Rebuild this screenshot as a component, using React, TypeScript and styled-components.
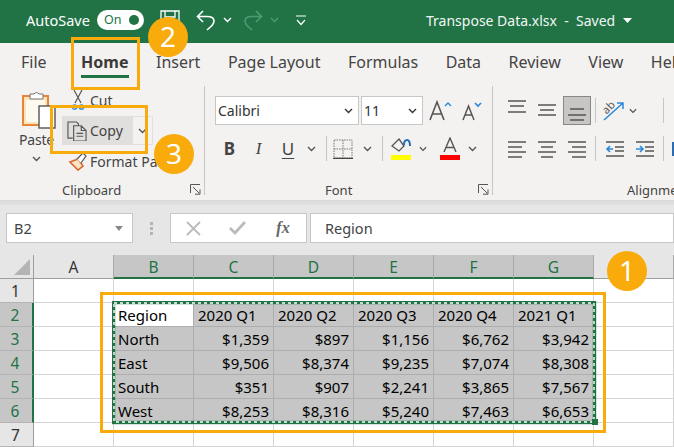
import React from "react";
import styled, { createGlobalStyle } from "styled-components";

const Global = createGlobalStyle`
  html, body { margin: 0; padding: 0; background: #fff; }
  * { box-sizing: border-box; }
`;
const FONT = `"Noto Sans", "Open Sans", sans-serif`;
const ORANGE = "#f8ab0a";
const GREEN = "#217346";

const Page = styled.div`
  position: relative; width: 674px; height: 447px; overflow: hidden; font-family: ${FONT}; background: #fff; color: #444;
`;
/* title bar */
const TitleBar = styled.div`
  display: flex; align-items: center; height: 43px; background: ${GREEN}; color: #fff; padding: 0 0 3px 26px; font-size: 14.5px;
`;
const AutoSave = styled.span` width: 71px; `;
const Toggle = styled.div`
  position: relative; width: 47px; height: 20px; border-radius: 10px; background: #fff; color: ${GREEN}; font-size: 12.5px; line-height: 20px; padding-left: 7px; margin-right: 16px;
  &::after { content: ""; position: absolute; right: 5px; top: 5px; width: 10px; height: 10px; border-radius: 50%; background: ${GREEN}; }
`;
const TitleIcon = styled.span<{ $w: number; $ml?: number }>`
  display: flex; justify-content: center; align-items: center; width: ${p => p.$w}px; margin-left: ${p => p.$ml ?? 0}px; flex: none;
`;
const FileName = styled.div`
  margin-left: 110px; white-space: pre; font-size: 14px; color: #f2f7f4; width: 197px;
`;
/* tabs */
const TabBar = styled.div`
  display: flex; height: 41px; background: #f3f2f1; padding: 0 0 0 21px; gap: 27.5px; font-size: 16px; white-space: nowrap; overflow: hidden;
`;
const Tab = styled.div<{ $active?: boolean; $ml?: number }>`
  position: relative; line-height: 38px; color: #444; font-weight: ${p => (p.$active ? 700 : 400)}; flex: none; margin-left: ${p => p.$ml ?? 0}px;
  ${p => p.$active && `color:#3b3a39; &::after{content:"";position:absolute;left:0;right:0;bottom:6px;height:3px;background:${GREEN};}`}
`;
/* ribbon */
const Ribbon = styled.div`
  display: flex; height: 116px; background: #f3f2f1; overflow: hidden;
`;
const Group = styled.div<{ $w: number; $sep?: boolean }>`
  position: relative; display: flex; flex-direction: column; width: ${p => p.$w}px; flex: none; margin: 2px 0 1px;
  ${p => p.$sep && `&::after{content:"";position:absolute;right:0;top:0;bottom:4px;width:1px;background:#c8c6c4;}`}
`;
const GroupBody = styled.div<{ $pl: number }>`
  flex: 1; padding: 10px 0 0 ${p => p.$pl}px; display: flex; flex-direction: column; gap: 11px;
`;
const GroupLabel = styled.div<{ $x: number }>`
  font-size: 13px; line-height: 18px; padding-left: ${p => p.$x}px; color: #444; height: 18px; white-space: nowrap;
`;
const Launcher = styled.span<{ $r: number }>`
  position: absolute; right: ${p => p.$r}px; bottom: 4px; width: 11px; height: 11px; display: flex;
`;
const ClipboardBody = styled.div`
  flex: 1; display: flex; padding-top: 4px;
`;
const PasteCol = styled.div`
  width: 62px; display: flex; flex-direction: column; align-items: flex-start; padding-left: 19px; font-size: 14px; line-height: 18px;
`;
const PasteLabel = styled.div` margin-top: 2px; letter-spacing: -.2px; `;
const PasteChevron = styled.div` padding-left: 13px; height: 14px; display:flex; align-items:center; margin-top:3px; `;
const ClipList = styled.div` display: flex; flex-direction: column; width: 142px; `;
const ClipRow = styled.div<{ $h: number; $mb?: number }>`
  display: flex; align-items: center; height: ${p => p.$h}px; margin-bottom: ${p => p.$mb ?? 0}px; font-size: 14px; white-space: nowrap; margin-left: 4px;
`;
const CopyMain = styled.div`
  display: flex; align-items: center; width: 71px; height: 29px; background: #e1dfdd; margin-left: -4px; padding-left: 4px;
`;
const CopySplit = styled.div`
  width: 20px; height: 29px; border: 1px solid #e1dfdd; border-left: 0; display: flex; align-items: center; justify-content: center;
`;
const ClipIcon = styled.span<{ $w: number }>` width: ${p => p.$w}px; display: flex; flex: none; align-items: center; justify-content: center; `;
const Row = styled.div<{ $h: number }>` display: flex; align-items: center; height: ${p => p.$h}px; `;
const Select = styled.div<{ $w: number; $ml?: number }>`
  width: ${p => p.$w}px; height: 29px; background: #fff; border: 1px solid #c8c6c4; margin-left: ${p => p.$ml ?? 0}px; display: flex; align-items: center; justify-content: space-between; padding: 0 5px 0 2px; font-size: 14px; color: #333; flex: none;
`;
const Slot = styled.span<{ $w: number; $ml?: number }>`
  display: flex; align-items: center; justify-content: center; flex: none; width: ${p => p.$w}px; margin-left: ${p => p.$ml ?? 0}px; height: 100%;
`;
const Pressed = styled.span`
  display: flex; align-items: center; justify-content: center; flex: none; width: 28px; height: 29px; background: #c8c6c4; border: 1px solid #8a8886; margin-left: 1px;
`;
const VSep = styled.span<{ $ml: number; $h?: number }>`
  width: 1px; height: ${p => p.$h ?? 25}px; background: #c8c6c4; margin-left: ${p => p.$ml}px; flex: none;
`;
const Letter = styled.span<{ $b?: boolean; $i?: boolean; $u?: boolean }>`
  font-size: 17px; color: #444; font-weight: ${p => (p.$b ? 700 : 400)};
  font-family: ${p => (p.$i ? `"Liberation Serif", serif` : FONT)}; font-style: ${p => (p.$i ? "italic" : "normal")};
  text-decoration: ${p => (p.$u ? "underline" : "none")}; text-underline-offset: 3px; line-height: 1;
`;
const FxLetter = styled(Letter)` color: #666; font-weight: 700; font-size: 16px; `;
const Shadow = styled.div` height: 5px; background: linear-gradient(#d8d8d8, #e2e2e2); `;
/* formula bar */
const FormulaBar = styled.div`
  display: flex; align-items: center; height: 50px; background: #e6e6e6; padding: 0 0 4px 6px; font-size: 14.5px;
`;
const FieldBox = styled.div<{ $w: number; $ml?: number }>`
  display: flex; align-items: center; flex: none; height: 30px; width: ${p => p.$w}px; margin-left: ${p => p.$ml ?? 0}px; background: #fff; border: 1px solid #c6c6c6; color: #444;
`;
const NameText = styled.span<{ $pl?: number }>` flex: 1; padding-left: ${p => p.$pl ?? 7}px; `;
const Dots = styled.span`
  width: 3px; height: 13px; margin-left: 17px; flex: none;
  background: repeating-linear-gradient(#b4b4b4 0 3px, transparent 3px 5px);
`;
/* sheet */
const Sheet = styled.div`
  display: grid; grid-template-columns: 34px repeat(8, 80px); grid-auto-rows: 24px; font-size: 15px; line-height: 25px; color: #000;
`;
const Corner = styled.div`
  background: #e6e6e6; border-right: 1px solid #9e9e9e; border-bottom: 1px solid #9e9e9e; position: relative;
  &::after { content: ""; position: absolute; right: 3px; bottom: 3px; border-left: 16px solid transparent; border-bottom: 16px solid #b4b4b4; }
`;
const ColHead = styled.div<{ $sel?: boolean }>`
  text-align: center; background: ${p => (p.$sel ? "#c6c6c6" : "#e6e6e6")}; color: ${p => (p.$sel ? GREEN : "#333")};
  border-right: 1px solid #aaa; border-bottom: ${p => (p.$sel ? `2px solid ${GREEN}` : "1px solid #9e9e9e")};
  font-size: 15.5px;
`;
const RowHead = styled.div<{ $sel?: boolean }>`
  text-align: center; background: ${p => (p.$sel ? "#c6c6c6" : "#e6e6e6")}; color: ${p => (p.$sel ? GREEN : "#333")};
  border-right: ${p => (p.$sel ? `2px solid ${GREEN}` : "1px solid #9e9e9e")}; border-bottom: 1px solid #b4b4b4; font-size: 15.5px; padding-right: 2px;
`;
const Cell = styled.div<{ $sel?: boolean; $white?: boolean; $right?: boolean }>`
  background: ${p => (p.$sel && !p.$white ? "#c6c6c6" : "#fff")};
  border-right: 1px solid ${p => (p.$sel ? "#aeaeae" : "#d4d4d4")}; border-bottom: 1px solid ${p => (p.$sel ? "#aeaeae" : "#d4d4d4")};
  text-align: ${p => (p.$right ? "right" : "left")}; padding: 0 4px; white-space: nowrap; overflow: hidden;
`;
/* overlays */
const OrangeBox = styled.div<{ $x: number; $y: number; $w: number; $h: number }>`
  position: absolute; left: ${p => p.$x}px; top: ${p => p.$y}px; width: ${p => p.$w}px; height: ${p => p.$h}px; border: 3px solid ${ORANGE};
`;
const Badge = styled.div<{ $x: number; $y: number }>`
  position: absolute; left: ${p => p.$x}px; top: ${p => p.$y}px; width: 40px; height: 40px; border-radius: 50%; background: ${ORANGE}; color: #fff; font-size: 28px; line-height: 38px; text-align: center;
`;
const Ants = styled.svg`
  position: absolute; left: 112px; top: 301px;
`;

const Chevron = ({ c = "#555" }: { c?: string }) => (
  <svg width="9" height="6" viewBox="0 0 9 6"><path d="M1 1l3.5 3.5L8 1" fill="none" stroke={c} strokeWidth="1.4" /></svg>
);
const LauncherIcon = () => (
  <svg width="11" height="11" viewBox="0 0 11 11" fill="none" stroke="#555"><path d="M.5 9V.5H10M3 3l6.5 6.5M5 10.2h5V5.5" /></svg>
);
const SaveIcon = () => (
  <svg width="20" height="20" viewBox="0 0 20 20" fill="none" stroke="#fff" strokeWidth="1.3"><path d="M1 1h18v18H1zM5 1v6h10V1M5 19v-7h10v7" /></svg>
);
const Undo = ({ c, flip }: { c: string; flip?: boolean }) => (
  <svg width="19" height="22" viewBox="0 0 19 22" fill="none" stroke={c} strokeWidth="1.6" style={flip ? { transform: "scaleX(-1)" } : undefined}>
    <path d="M7 2L1.500 7.500 7 13M2 7.500h9c4.500 0 7 2 7 4.500 0 2-1 3-2 4.500L11 21" />
  </svg>
);
const Customize = () => (
  <svg width="12" height="11" viewBox="0 0 12 11" fill="none" stroke="#fff" strokeWidth="1.2"><path d="M1 1h10M2 5l4 4.500 4-4.500" /></svg>
);
const Lines = ({ rows, h = 20 }: { rows: [number, number, number][]; h?: number }) => (
  <svg width="18" height={h} viewBox={`0 0 18 ${h}`} stroke="#555" strokeWidth="1.5">
    {rows.map(([y, a, b], i) => <path key={i} d={`M${a} ${y}H${b}`} />)}
  </svg>
);
const IndentIcon = ({ flip }: { flip?: boolean }) => (
  <svg width="20" height="18" viewBox="0 0 20 18" fill="none">
    <path d="M1 2h18M10 7h9M10 11h9M1 16h18" stroke="#555" strokeWidth="1.5" />
    <path d={flip ? "M1 9h6M5 6l3 3-3 3" : "M8 9H2M5 6L2 9l3 3"} stroke="#2b88d8" strokeWidth="1.6" />
  </svg>
);

const columns = ["B", "C", "D", "E", "F", "G"];
const data = [
  ["Region", "2020 Q1", "2020 Q2", "2020 Q3", "2020 Q4", "2021 Q1"],
  ["North", "$1,359", "$897", "$1,156", "$6,762", "$3,942"],
  ["East", "$9,506", "$8,374", "$9,235", "$7,074", "$8,308"],
  ["South", "$351", "$907", "$2,241", "$3,865", "$7,567"],
  ["West", "$8,253", "$8,316", "$5,240", "$7,463", "$6,653"],
];

export default function App() {
  return (
    <Page>
      <Global />
      <TitleBar>
        <AutoSave>AutoSave</AutoSave>
        <Toggle>On</Toggle>
        <TitleIcon $w={20}><SaveIcon /></TitleIcon>
        <TitleIcon $w={19} $ml={16}><Undo c="#fff" /></TitleIcon>
        <TitleIcon $w={24}><Chevron c="#fff" /></TitleIcon>
        <TitleIcon $w={19} $ml={5}><Undo c="#4f9a74" flip /></TitleIcon>
        <TitleIcon $w={22}><Chevron c="#4f9a74" /></TitleIcon>
        <TitleIcon $w={31}><Customize /></TitleIcon>
        <FileName>Transpose Data.xlsx  -  Saved</FileName>
        <svg width="9" height="5" viewBox="0 0 9 5"><path d="M0 0h9L4.500 5z" fill="#fff" /></svg>
      </TitleBar>

      <TabBar>
        <Tab>File</Tab>
        <Tab $active $ml={7}>Home</Tab>
        <Tab>Insert</Tab>
        <Tab>Page Layout</Tab>
        <Tab>Formulas</Tab>
        <Tab>Data</Tab>
        <Tab>Review</Tab>
        <Tab>View</Tab>
        <Tab>Help</Tab>
      </TabBar>

      <Ribbon>
        <Group $w={205} $sep>
          <ClipboardBody>
            <PasteCol>
              <svg width="36" height="39" viewBox="0 0 36 39" style={{ marginLeft: 3 }}>
                <rect x="1" y="6" width="25" height="29" fill="#fbe6b8" stroke="#e8853b" strokeWidth="2" />
                <rect x="4" y="10" width="19" height="22" fill="#fffaf0" />
                <path d="M8 9V4h4a3 3 0 0 1 5 0h4v5z" fill="#fff" stroke="#777" />
                <rect x="17" y="16" width="16" height="22" fill="#fff" stroke="#555" strokeWidth="1.4" />
              </svg>
              <PasteLabel>Paste</PasteLabel>
              <PasteChevron><Chevron /></PasteChevron>
            </PasteCol>
            <ClipList>
              <ClipRow $h={20} $mb={6}>
                <ClipIcon $w={24}>
                  <svg width="14" height="22" viewBox="0 0 14 22" fill="none"><path d="M3 1l7 13M11 1L4 14" stroke="#555" strokeWidth="1.2" /><circle cx="3.500" cy="18" r="2.200" stroke="#2b88d8" strokeWidth="1.3" /><circle cx="10.500" cy="18" r="2.200" stroke="#2b88d8" strokeWidth="1.3" /></svg>
                </ClipIcon>
                Cut
              </ClipRow>
              <ClipRow $h={29}>
                <CopyMain>
                  <ClipIcon $w={24}>
                    <svg width="20" height="20" viewBox="0 0 21 21" fill="none" stroke="#555" strokeWidth="1.2" style={{ marginRight: 3 }}><path d="M6 18H1V1h9l2 2v2" /><path d="M7 5h8l5 5v11H7zM15 5v5h5M10 13h7M10 16h7" /></svg>
                  </ClipIcon>
                  Copy
                </CopyMain>
                <CopySplit><Chevron /></CopySplit>
              </ClipRow>
              <ClipRow $h={32}>
                <ClipIcon $w={24}>
                  <svg width="20" height="20" viewBox="0 0 20 20" fill="none"><path d="M2 11l8-3 5 7-5 4z" fill="#fbe3c8" stroke="#d9662c" strokeWidth="1.6" /><path d="M9 8l6-6 3 3-5 7" fill="#fff" stroke="#555" strokeWidth="1.2" /></svg>
                </ClipIcon>
                Format Painter
              </ClipRow>
            </ClipList>
          </ClipboardBody>
          <GroupLabel $x={62}>Clipboard</GroupLabel>
          <Launcher $r={4}><LauncherIcon /></Launcher>
        </Group>

        <Group $w={288} $sep>
          <GroupBody $pl={10}>
            <Row $h={29}>
              <Select $w={144}>Calibri<Chevron c="#333" /></Select>
              <Select $w={62} $ml={2}>11<Chevron c="#333" /></Select>
              <Slot $w={34}>
                <svg width="23" height="21" viewBox="0 0 23 21" fill="none"><path d="M1 20L8 2l7 18M3.500 14h9" stroke="#555" strokeWidth="1.6" /><path d="M16 6l3-3 3 3" stroke="#2b88d8" strokeWidth="1.4" /></svg>
              </Slot>
              <Slot $w={30}>
                <svg width="20" height="20" viewBox="0 0 20 20" fill="none"><path d="M1 19L6.500 5 12 19M3 14h7" stroke="#555" strokeWidth="1.5" /><path d="M13 2l3 3 3-3" stroke="#2b88d8" strokeWidth="1.6" /></svg>
              </Slot>
            </Row>
            <Row $h={25}>
              <Slot $w={29}><Letter $b>B</Letter></Slot>
              <Slot $w={29}><Letter $i>I</Letter></Slot>
              <Slot $w={30}><Letter $u>U</Letter></Slot>
              <Slot $w={16}><Chevron /></Slot>
              <VSep $ml={7} />
              <Slot $w={32}>
                <svg width="20" height="20" viewBox="0 0 20 20" fill="none" stroke="#777" strokeDasharray="1.500 1"><path d="M1 1h18v18H1zM10 1v18M1 10h18" /><path d="M0 19.500h20" stroke="#444" strokeDasharray="none" strokeWidth="1.400" /></svg>
              </Slot>
              <Slot $w={16}><Chevron /></Slot>
              <VSep $ml={7} />
              <Slot $w={36}>
                <svg width="20" height="24" viewBox="0 0 20 24" fill="none"><path d="M1 9l7-7 5 7-5 5z" stroke="#555" strokeWidth="1.300" /><path d="M13 8c0-3 1-5 3-5s3 3 3 6" stroke="#1f6fb8" strokeWidth="2" /><rect y="18" width="20" height="5" fill="#ffff00" /></svg>
              </Slot>
              <Slot $w={8}><Chevron /></Slot>
              <Slot $w={28} $ml={9}>
                <svg width="20" height="24" viewBox="0 0 20 24" fill="none"><path d="M4 15L10 1l6 14M6 10.500h8" stroke="#555" strokeWidth="1.400" /><rect y="18" width="20" height="5" fill="#ff0000" /></svg>
              </Slot>
              <Slot $w={16}><Chevron /></Slot>
            </Row>
          </GroupBody>
          <GroupLabel $x={120}>Font</GroupLabel>
          <Launcher $r={4}><LauncherIcon /></Launcher>
        </Group>

        <Group $w={181}>
          <GroupBody $pl={9}>
            <Row $h={29}>
              <Slot $w={30}><Lines h={24} rows={[[2, 0, 18], [7, 2, 16], [13, 0, 18]]} /></Slot>
              <Slot $w={30}><Lines h={24} rows={[[6, 0, 18], [11, 2, 16], [16, 0, 18]]} /></Slot>
              <Pressed><Lines h={24} rows={[[10, 2, 16], [16, 0, 18], [21, 2, 16]]} /></Pressed>
              <VSep $ml={4} />
              <Slot $w={30} $ml={3}>
                <svg width="24" height="22" viewBox="0 0 24 22" fill="none"><path d="M2 20L21 3M15 3h6v6" stroke="#2b88d8" strokeWidth="1.500" /><text x="1" y="12" fontSize="11" fill="#555" transform="rotate(-45 6 9)" fontFamily="Noto Sans, sans-serif">ab</text></svg>
              </Slot>
              <Slot $w={8}><Chevron /></Slot>
              <VSep $ml={26} />
            </Row>
            <Row $h={25}>
              <Slot $w={30}><Lines rows={[[3, 0, 18], [8, 0, 14], [13, 0, 18], [18, 0, 14]]} /></Slot>
              <Slot $w={30}><Lines rows={[[3, 0, 18], [8, 3, 15], [13, 0, 18], [18, 3, 15]]} /></Slot>
              <Slot $w={30}><Lines rows={[[3, 0, 18], [8, 4, 18], [13, 0, 18], [18, 4, 18]]} /></Slot>
              <VSep $ml={3} />
              <Slot $w={30} $ml={4}><IndentIcon /></Slot>
              <Slot $w={30}><IndentIcon flip /></Slot>
              <VSep $ml={3} />
              <Slot $w={8} $ml={8}>
                <svg width="8" height="14" viewBox="0 0 8 14"><rect width="8" height="14" fill="#2b6cb0" /></svg>
              </Slot>
            </Row>
          </GroupBody>
          <GroupLabel $x={134}>Alignment</GroupLabel>
        </Group>
      </Ribbon>
      <Shadow />

      <FormulaBar>
        <FieldBox $w={127}>
          <NameText>B2</NameText>
          <svg width="8" height="5" viewBox="0 0 8 5" style={{ marginRight: 9 }}><path d="M0 0h8L4 5z" fill="#888" /></svg>
        </FieldBox>
        <Dots />
        <FieldBox $w={137} $ml={17}>
          <Slot $w={44}>
            <svg width="15" height="15" viewBox="0 0 15 15"><path d="M1 1l13 13M14 1L1 14" stroke="#bbb" strokeWidth="1.800" /></svg>
          </Slot>
          <Slot $w={45}>
            <svg width="17" height="14" viewBox="0 0 17 14"><path d="M1 7l5 5L16 1" fill="none" stroke="#bbb" strokeWidth="2.800" /></svg>
          </Slot>
          <Slot $w={46}>
            <FxLetter $i>fx</FxLetter>
          </Slot>
        </FieldBox>
        <FieldBox $w={364} $ml={3}><NameText $pl={14}>Region</NameText></FieldBox>
      </FormulaBar>

      <Sheet>
        <Corner />
        <ColHead>A</ColHead>
        {columns.map(c => <ColHead key={c} $sel>{c}</ColHead>)}
        <ColHead />

        <RowHead>1</RowHead>
        {Array.from({ length: 8 }, (_, i) => <Cell key={i} />)}

        {data.map((row, r) => (
          <React.Fragment key={r}>
            <RowHead $sel>{r + 2}</RowHead>
            <Cell />
            {row.map((v, c) => (
              <Cell key={c} $sel $white={r === 0 && c === 0} $right={r > 0 && c > 0}>{v}</Cell>
            ))}
            <Cell />
          </React.Fragment>
        ))}

        <RowHead>7</RowHead>
        {Array.from({ length: 8 }, (_, i) => <Cell key={i} />)}
      </Sheet>

      <Ants width="486" height="125" viewBox="0 0 486 125" fill="none">
        <rect x="1.500" y="1.500" width="481" height="120" stroke={GREEN} strokeWidth="3.400" />
        <rect x="2" y="2" width="480" height="119" stroke="#fff" strokeWidth="1.400" strokeDasharray="3 3" />
        <rect x="480" y="118" width="6" height="6" fill={GREEN} />
      </Ants>
      <OrangeBox $x={100} $y={292} $w={506} $h={141} />
      <OrangeBox $x={71} $y={37} $w={69} $h={53} />
      <OrangeBox $x={50} $y={105} $w={98} $h={49} />
      <Badge $x={148} $y={17}>2</Badge>
      <Badge $x={154} $y={134}>3</Badge>
      <Badge $x={607} $y={251}>1</Badge>
    </Page>
  );
}
